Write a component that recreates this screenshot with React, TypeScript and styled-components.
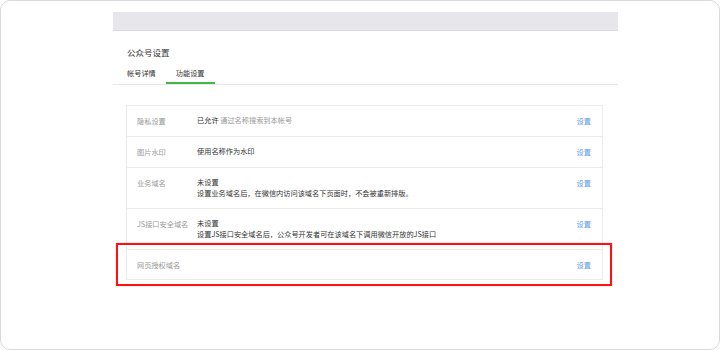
import React from 'react';
import styled, { createGlobalStyle } from 'styled-components';

/**
 * 公众号设置 - 功能设置 页面
 */

type Row = {
  label: string;
  value?: string;
  note?: string;
  desc?: string;
  marked?: boolean;
};

const rows: Row[] = [
  { label: '隐私设置', value: '已允许', note: '通过名称搜索到本帐号' },
  { label: '图片水印', value: '使用名称作为水印' },
  {
    label: '业务域名',
    value: '未设置',
    desc: '设置业务域名后，在微信内访问该域名下页面时，不会被重新排版。',
  },
  {
    label: 'JS接口安全域名',
    value: '未设置',
    desc: '设置JS接口安全域名后，公众号开发者可在该域名下调用微信开放的JS接口',
  },
  { label: '网页授权域名', marked: true },
];

const App = () => {
  return (
    <>
      <GlobalStyle />
      <Frame>
        <Main>
          <TopBar />
          <Title>公众号设置</Title>
          <Tabs>
            <Tab>帐号详情</Tab>
            <Tab $active>功能设置</Tab>
          </Tabs>
          <Table>
            {rows.map((row) => (
              <TableRow key={row.label} $marked={row.marked}>
                <Label>{row.label}</Label>
                <Value>
                  {row.value && (
                    <Line>
                      {row.value}
                      {row.note && <Muted> {row.note}</Muted>}
                    </Line>
                  )}
                  {row.desc && <Line>{row.desc}</Line>}
                </Value>
                <Action href="#">设置</Action>
              </TableRow>
            ))}
          </Table>
        </Main>
      </Frame>
    </>
  );
};

export default App;

const GlobalStyle = createGlobalStyle`
  html, body {
    margin: 0;
    padding: 0;
    background: #fff;
  }
  body {
    font-family: "Noto Sans CJK SC", "Noto Sans", sans-serif;
    color: #333;
  }
`;

const Frame = styled.div`
  box-sizing: border-box;
  width: 720px;
  height: 350px;
  padding-top: 11px;
  border: 1px solid #d9d9d9;
  border-radius: 10px;
  background: #fff;
`;

const Main = styled.div`
  width: 505px;
  margin-left: 112px;
`;

const TopBar = styled.div`
  height: 18px;
  background: #e7e7eb;
  border-bottom: 1px solid #dcdce0;
`;

const Title = styled.div`
  margin-top: 15px;
  padding-left: 14px;
  font-size: 8.5px;
  line-height: 12px;
  color: #333;
`;

const Tabs = styled.div`
  display: flex;
  margin-top: 9px;
  padding-left: 4px;
  border-bottom: 1px solid #e7e7eb;
`;

const Tab = styled.div<{ $active?: boolean }>`
  padding: 0 10px 3px;
  font-size: 7.2px;
  line-height: 12px;
  color: #333;
  border-bottom: 2px solid ${(p) => (p.$active ? '#44b549' : 'transparent')};
`;

const Table = styled.div`
  margin: 20px 15px 0 13px;
  border: 1px solid #ececec;
  border-bottom: none;
`;

const TableRow = styled.div<{ $marked?: boolean }>`
  position: relative;
  display: grid;
  grid-template-columns: 60px 1fr auto;
  align-items: start;
  padding: 9px 11px 9px 10px;
  border-bottom: 1px solid #ececec;
  font-size: 7.2px;
  line-height: 12px;

  ${(p) =>
    p.$marked &&
    `
    padding-bottom: 8px;
    &::after {
      content: '';
      position: absolute;
      top: -7px;
      left: -11px;
      right: -10px;
      bottom: -7px;
      border: 2px solid #f11;
      box-shadow: 0 0 1px rgba(255, 0, 0, 0.35);
      pointer-events: none;
    }
  `}
`;

const Label = styled.div`
  color: #999;
  white-space: nowrap;
`;

const Value = styled.div`
  display: flex;
  flex-direction: column;
  color: #333;
`;

const Line = styled.div`
  line-height: 11px;
  white-space: nowrap;
`;

const Muted = styled.span`
  color: #999;
`;

const Action = styled.a`
  color: #5b9be0;
  text-decoration: none;
`;
